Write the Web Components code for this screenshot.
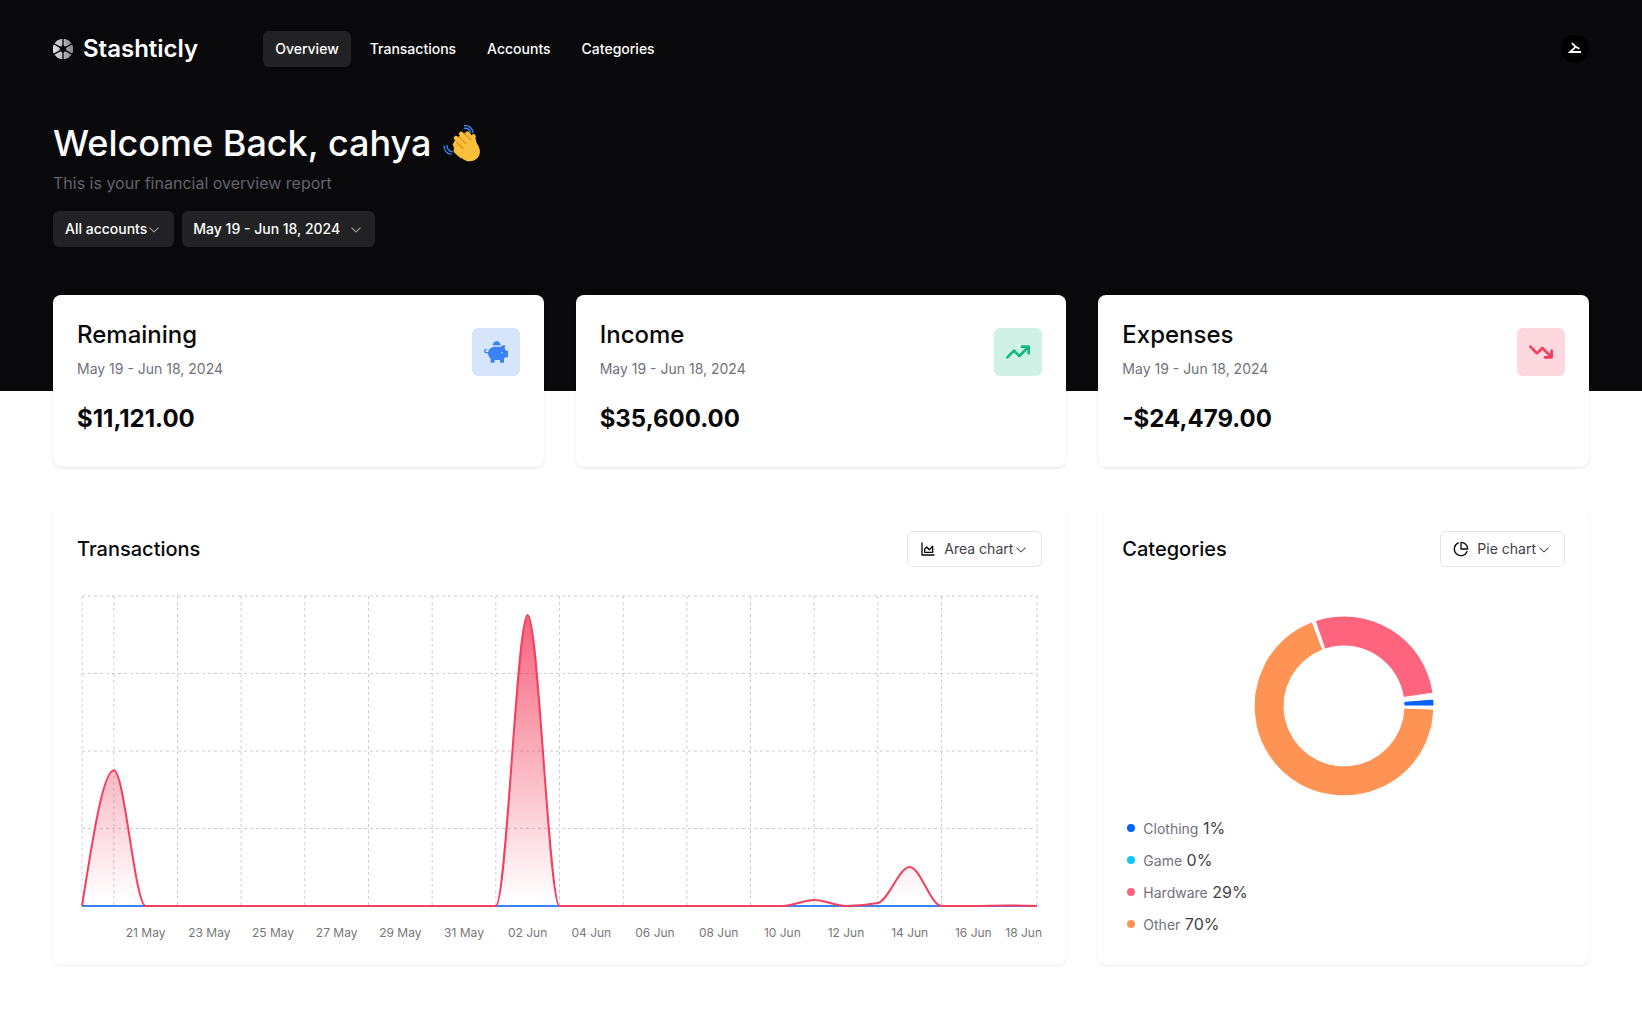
<!DOCTYPE html>
<html lang="en">
<head>
<meta charset="utf-8">
<meta name="viewport" content="width=device-width, initial-scale=1">
<title>Stashticly</title>
<style>
  body {
    margin: 0;
    background: #fff;
    color: #09090b;
    font: 400 14px/20px Inter, "Liberation Sans", sans-serif;
  }
</style>
</head>
<body>
<stash-app></stash-app>

<script>
const define = (name, html, setup) => {
  const template = document.createElement('template');
  template.innerHTML = html;
  customElements.define(name, class extends HTMLElement {
    constructor() {
      super();
      this.attachShadow({ mode: 'open' }).append(template.content.cloneNode(true));
    }
    connectedCallback() {
      if (setup && !this.ready) { this.ready = true; setup(this, this.shadowRoot); }
    }
  });
};

/* ---------- icons ---------- */
const ICONS = {
  logo: ['0 0 20 20', (() => {
    const p = (r, a) => `${(10 + r * Math.cos(a * Math.PI / 180)).toFixed(2)} ${(10 + r * Math.sin(a * Math.PI / 180)).toFixed(2)}`;
    const stops = '<defs><linearGradient id="steel" gradientUnits="userSpaceOnUse" x1="0" y1="0" x2="20" y2="0"><stop offset="0" stop-color="#e2e2e2"/><stop offset=".5" stop-color="#b8b8b8"/><stop offset="1" stop-color="#858585"/></linearGradient></defs>';
    return stops + [0, 60, 120, 180, 240, 300].map(m =>
      `<path fill="url(#steel)" d="M${p(10.2, m - 26)}A10.2 10.2 0 0 1 ${p(10.2, m + 26)}L${p(4.2, m + 21)}L${p(2.8, m)}L${p(4.2, m - 21)}Z"/>`
    ).join('');
  })()],
  chevron: ['0 0 15 15', '<path fill="currentColor" fill-rule="evenodd" d="M3.135 6.158C3.324 5.957 3.64 5.946 3.842 6.135L7.5 9.565L11.158 6.135C11.36 5.946 11.676 5.957 11.865 6.158C12.054 6.359 12.043 6.676 11.842 6.865L7.842 10.615C7.65 10.795 7.35 10.795 7.158 10.615L3.158 6.865C2.957 6.676 2.946 6.359 3.135 6.158Z"/>'],
  area: ['0 0 24 24', '<g fill="none" stroke="currentColor" stroke-width="2" stroke-linecap="round" stroke-linejoin="round"><path d="M3 3v18h18"/><path d="M7 12v5h12V8l-5 5-4-4Z"/></g>'],
  pie: ['0 0 24 24', '<g fill="none" stroke="currentColor" stroke-width="2" stroke-linecap="round" stroke-linejoin="round"><path d="M21.21 15.89A10 10 0 1 1 8 2.83"/><path d="M22 12A10 10 0 0 0 12 2v10z"/></g>'],
  piggy: ['0 0 576 512', '<path fill="currentColor" d="M560 224h-29.500c-8.800-20-21.600-37.700-37.400-52.500L512 96h-32c-29.400 0-55.400 13.500-73 34.300-7.600-1.100-15.100-2.300-23-2.300H256c-77.400 0-141.900 55-156.800 128H56c-14.800 0-26.500-13.500-23.500-28.800C34.700 215.800 45.400 208 57 208h1c3.300 0 6-2.700 6-6v-20c0-3.300-2.700-6-6-6-28.500 0-53.900 20.400-57.500 48.600C-3.900 258.800 22.700 288 56 288h40c0 52.200 25.400 98.100 64 127.300V496c0 8.800 7.200 16 16 16h64c8.800 0 16-7.200 16-16v-48h128v48c0 8.800 7.200 16 16 16h64c8.800 0 16-7.200 16-16v-80.700c11.800-8.900 22.300-19.400 31.300-31.300H560c8.800 0 16-7.200 16-16V240c0-8.800-7.200-16-16-16zm-128 64c-8.800 0-16-7.200-16-16s7.200-16 16-16 16 7.200 16 16-7.200 16-16 16zM256 96h128c5.400 0 10.700.4 15.900.8 0-.3.1-.5.1-.8 0-53-43-96-96-96s-96 43-96 96c0 2.100.5 4.100.6 6.200 15.200-3.900 31-6.200 47.400-6.200z"/>'],
  up: ['0 0 576 512', '<path fill="currentColor" d="M384 160c-17.700 0-32-14.300-32-32s14.300-32 32-32H544c17.700 0 32 14.300 32 32V288c0 17.700-14.300 32-32 32s-32-14.300-32-32V205.300L342.600 374.600c-12.500 12.500-32.800 12.500-45.300 0L192 269.300 54.600 406.600c-12.500 12.500-32.800 12.500-45.300 0s-12.500-32.800 0-45.300l160-160c12.500-12.500 32.800-12.500 45.300 0L320 306.700 466.700 160H384z"/>'],
  down: ['0 0 576 512', '<path fill="currentColor" d="M384 352c-17.700 0-32 14.300-32 32s14.300 32 32 32H544c17.700 0 32-14.300 32-32V224c0-17.700-14.300-32-32-32s-32 14.300-32 32v82.700L342.600 137.400c-12.500-12.500-32.800-12.500-45.300 0L192 242.700 54.600 105.400C42.100 92.900 21.800 92.900 9.300 105.400s-12.500 32.800 0 45.300l160 160c12.500 12.500 32.800 12.500 45.300 0L320 205.300 466.700 352H384z"/>'],
  user: ['0 0 28 28', '<g fill="none" stroke="#fff" stroke-width="1.800"><path d="M11 8.200L14.600 11.800L18.400 13.800"/><path d="M15.200 11.400L9 17H20"/></g>'],
  wave: ['0 0 36 36', `
    <g fill="#fbc03a">
      <path d="M10.500 16.500L18 9.500L26 14L27.400 10.500C28.200 8.700 31.400 9.600 31 12.200C30.600 14.500 31.400 17 32.800 19.400C36 24.600 35.800 30 31.600 33.200C27 36.600 21.700 35.700 17.700 32.100L10.300 25.400Z"/>
      <g fill="none" stroke="#fbc03a" stroke-width="4.200" stroke-linecap="round">
        <path d="M12.200 25.600L17 30"/><path d="M11.300 19.600L19 27"/><path d="M12.300 13.300L22 23"/><path d="M17.200 9.300L26 18"/><path d="M23.200 9.100L27.500 14.500"/>
      </g>
    </g>
    <g fill="none" stroke="#e08a24" stroke-width="1.100" stroke-linecap="round">
      <path d="M12.700 17.200L19 23.200"/><path d="M15 11.800L21.500 18.400"/><path d="M20.200 8.800L26.600 15.200"/>
    </g>
    <g fill="none" stroke="#3f86f0" stroke-width="1.300" stroke-linecap="round">
      <path d="M20.400 1.700C24 .9 28 3.700 28.500 8.300"/><path d="M20.300 4.200C22.800 3.700 25.200 5.200 26 7.900"/>
      <path d="M1 20.800C.9 25 3.500 28.200 7.600 28.600"/><path d="M3.600 20.200C3.900 23.400 5.900 25.900 9 26.400"/>
    </g>`]
};

class StashIcon extends HTMLElement {
  constructor() { super(); this.attachShadow({ mode: 'open' }); }
  connectedCallback() {
    const [box, body] = ICONS[this.getAttribute('name')];
    this.shadowRoot.innerHTML = `<style>:host{display:block;width:16px;height:16px;flex:none}svg{display:block;width:100%;height:100%}</style><svg viewBox="${box}" aria-hidden="true">${body}</svg>`;
  }
}

/* ---------- page ---------- */
define('stash-app', `
  <style>
    :host { display: block; padding-bottom: 32px; }
    main { max-width: 1536px; margin: -96px auto 0; display: grid; gap: 40px; }
    .summary, .charts { display: grid; grid-template-columns: repeat(3, minmax(0, 1fr)); gap: 32px; }
    stash-panel:first-child { grid-column: span 2; }
    @media (max-width: 1000px) {
      .summary, .charts { grid-template-columns: minmax(0, 1fr); }
      stash-panel:first-child { grid-column: auto; }
      main { padding: 0 16px; }
    }
  </style>
  <stash-header></stash-header>
  <main>
    <section class="summary">
      <stash-stat icon="piggy" style="--tint:#d8e6fd;--ink:#3b82f6"><span slot="title">Remaining</span><span slot="value">$11,121.00</span></stash-stat>
      <stash-stat icon="up" style="--tint:#cff1e6;--ink:#10b981"><span slot="title">Income</span><span slot="value">$35,600.00</span></stash-stat>
      <stash-stat icon="down" style="--tint:#fdd9df;--ink:#f43f5e"><span slot="title">Expenses</span><span slot="value">-$24,479.00</span></stash-stat>
    </section>
    <section class="charts">
      <stash-panel>
        <span slot="title">Transactions</span>
        <stash-select slot="action" icon="area" label="Transactions chart type" options="Area chart|Line chart|Bar chart"></stash-select>
        <stash-area-chart></stash-area-chart>
      </stash-panel>
      <stash-panel>
        <span slot="title">Categories</span>
        <stash-select slot="action" icon="pie" label="Categories chart type" options="Pie chart|Radar chart|Radial chart"></stash-select>
        <stash-donut></stash-donut>
      </stash-panel>
    </section>
  </main>`);

define('stash-header', `
  <style>
    :host { display: block; background: #09090b; color: #fff; padding: 31px 16px 144px; }
    .inner { max-width: 1536px; margin: 0 auto; }
    .bar { display: flex; align-items: center; margin-bottom: 56px; }
    .brand { display: flex; align-items: center; gap: 10px; color: inherit; text-decoration: none; font-size: 24px; line-height: 32px; font-weight: 600; }
    .brand stash-icon { width: 20px; height: 20px; }
    nav { display: flex; gap: 7px; margin-left: 65px; flex: 1; }
    nav a { padding: 8px 12px; border-radius: 6px; color: inherit; text-decoration: none; font-weight: 500; }
    nav a[aria-current] { background: #222224; }
    .avatar { border: 0; padding: 0; width: 28px; height: 28px; border-radius: 50%; background: #000; }
    .avatar stash-icon { width: 28px; height: 28px; }
    h1 { display: flex; align-items: center; gap: 12px; margin: 0 0 8px; font-size: 36px; line-height: 40px; font-weight: 500; }
    h1 stash-icon { width: 38px; height: 38px; }
    p { margin: 0 0 16px; font-size: 16px; line-height: 24px; color: #63636b; }
    .filters { display: flex; gap: 8px; }
    .date { display: flex; align-items: center; gap: 8px; border: 0; border-radius: 6px; background: #222224; color: inherit; font: inherit; font-weight: 500; height: 36px; padding: 0 11px; }
    .date stash-icon { opacity: .6; }
    @media (max-width: 700px) { .bar { flex-wrap: wrap; gap: 16px; } nav { margin: 0; flex-wrap: wrap; } }
  </style>
  <div class="inner">
    <div class="bar">
      <a class="brand" href="#"><stash-icon name="logo"></stash-icon><span>Stashticly</span></a>
      <nav><a href="#overview" aria-current="page">Overview</a><a href="#transactions">Transactions</a><a href="#accounts">Accounts</a><a href="#categories">Categories</a></nav>
      <button class="avatar" type="button" aria-label="Account menu"><stash-icon name="user"></stash-icon></button>
    </div>
    <h1><span>Welcome Back, cahya</span><stash-icon name="wave"></stash-icon></h1>
    <p>This is your financial overview report</p>
    <div class="filters">
      <stash-select dark label="Account" options="All accounts"></stash-select>
      <button class="date" type="button"><span>May 19 - Jun 18, 2024</span><stash-icon name="chevron"></stash-icon></button>
    </div>
  </div>`);

define('stash-select', `
  <style>
    :host { display: inline-grid; align-items: center; height: 36px; }
    label, select, .lead, .chevron { grid-area: 1 / 1; }
    label { width: 1px; height: 1px; overflow: hidden; clip-path: inset(50%); }
    select { appearance: none; box-sizing: border-box; field-sizing: content; height: 36px; margin: 0; border: 1px solid #e4e4e7; border-radius: 6px;
      background: #fff; color: #3f3f46; font: inherit; line-height: 20px; padding: 0 28px 0 12px; }
    .lead, .chevron { pointer-events: none; color: #09090b; }
    .lead { display: none; margin-left: 13px; }
    .chevron { justify-self: end; margin-right: 13px; opacity: .7; }
    :host([icon]) .lead { display: block; }
    :host([icon]) select { padding-left: 36px; }
    :host([dark]) select { background: #222224; border: 0; color: #fff; font-weight: 500; padding-right: 27px; }
    :host([dark]) .chevron { color: #fff; margin-right: 12px; opacity: .6; }
  </style>
  <label for="field"></label>
  <select id="field"></select>
  <stash-icon class="chevron" name="chevron"></stash-icon>`, (host, root) => {
  root.querySelector('label').setAttribute('aria-label', host.getAttribute('label'));
  const select = root.querySelector('select');
  select.setAttribute('aria-label', host.getAttribute('label'));
  host.getAttribute('options').split('|').forEach(o => select.add(new Option(o)));
  if (host.hasAttribute('icon')) {
    const lead = document.createElement('stash-icon');
    lead.className = 'lead';
    lead.setAttribute('name', host.getAttribute('icon'));
    root.append(lead);
  }
});

define('stash-stat', `
  <style>
    :host { display: block; background: #fff; border-radius: 8px; box-shadow: 0 1px 3px rgba(0,0,0,.1); padding: 24px; }
    header { display: flex; justify-content: space-between; align-items: center; margin-bottom: 24px; }
    h2 { margin: 0 0 8px; font-size: 24px; line-height: 32px; font-weight: 500; }
    p { margin: 0; color: #71717a; }
    .badge { display: grid; place-items: center; width: 48px; height: 48px; margin-top: 6px; border-radius: 6px; background: var(--tint); color: var(--ink); }
    .badge stash-icon { width: 24px; height: 24px; }
    .value { margin-bottom: 8px; font-size: 24px; line-height: 32px; font-weight: 700; }
  </style>
  <header>
    <div><h2><slot name="title"></slot></h2><p>May 19 - Jun 18, 2024</p></div>
    <div class="badge"></div>
  </header>
  <div class="value"><slot name="value"></slot></div>`, (host, root) => {
  const icon = document.createElement('stash-icon');
  icon.setAttribute('name', host.getAttribute('icon'));
  root.querySelector('.badge').append(icon);
});

define('stash-panel', `
  <style>
    :host { display: block; min-width: 0; background: #fff; border-radius: 8px; box-shadow: 0 1px 2px rgba(0,0,0,.08); padding: 24px; }
    header { display: flex; justify-content: space-between; align-items: center; margin-bottom: 24px; }
    h2 { margin: 0; font-size: 20px; line-height: 28px; font-weight: 500; }
  </style>
  <header><h2><slot name="title"></slot></h2><slot name="action"></slot></header>
  <slot></slot>`);

/* Cubic path through the points that never overshoots them. */
function monotonePath(pts) {
  const n = pts.length, s = [], t = [];
  for (let i = 0; i < n - 1; i++) s[i] = (pts[i + 1][1] - pts[i][1]) / (pts[i + 1][0] - pts[i][0]);
  for (let i = 1; i < n - 1; i++) {
    const mean = (s[i - 1] + s[i]) / 2;
    t[i] = (Math.sign(s[i - 1]) + Math.sign(s[i])) * Math.min(Math.abs(s[i - 1]), Math.abs(s[i]), Math.abs(mean) / 2) || 0;
  }
  t[0] = (3 * s[0] - t[1]) / 2;
  t[n - 1] = (3 * s[n - 2] - t[n - 2]) / 2;
  let d = `M${pts[0]}`;
  for (let i = 0; i < n - 1; i++) {
    const [x0, y0] = pts[i], [x1, y1] = pts[i + 1], k = (x1 - x0) / 3;
    d += `C${x0 + k},${y0 + k * t[i]},${x1 - k},${y1 - k * t[i + 1]},${x1},${y1}`;
  }
  return d;
}

define('stash-area-chart', `
  <style>
    :host { display: block; height: 350px; }
    svg { display: block; width: 100%; height: 350px; overflow: visible; }
    text { font-size: 12px; fill: #777; text-anchor: middle; }
    text.end { text-anchor: end; }
  </style>
  <svg role="img" aria-label="Income and expenses by day"></svg>`, (host, root) => {
  const svg = root.querySelector('svg');
  const days = 30, top = 5, base = 315;
  const expenses = { 1: 135.7, 14: 291, 23: 6, 25: 3, 26: 39, 29: .5 };
  const draw = () => {
    const width = Math.floor(host.getBoundingClientRect().width);
    if (!width) return;
    const x = i => 5 + (width - 10) * i / days;
    let grid = '', labels = '';
    for (let i = 0; i < 5; i++) { const y = top + i * 77.5; grid += `M5 ${y}H${width - 5}`; }
    for (const i of [0, 1, 3, 5, 7, 9, 11, 13, 15, 17, 19, 21, 23, 25, 27, 30]) grid += `M${x(i)} ${top}V${base}`;
    const start = Date.UTC(2024, 4, 19);
    for (let i = 2; i <= days; i += 2) {
      const d = new Date(start + i * 864e5);
      const name = String(d.getUTCDate()).padStart(2, '0') + (d.getUTCMonth() === 4 ? ' May' : ' Jun');
      labels += i === days ? `<text class="end" x="${width}" y="346">${name}</text>` : `<text x="${x(i)}" y="346">${name}</text>`;
    }
    const pts = Array.from({ length: days + 1 }, (_, i) => [x(i), base - (expenses[i] || 0)]);
    const line = monotonePath(pts);
    svg.innerHTML = `
      <defs><linearGradient id="fade" x1="0" y1="0" x2="0" y2="1"><stop offset="2%" stop-color="#f43f5e" stop-opacity=".8"/><stop offset="98%" stop-color="#f43f5e" stop-opacity="0"/></linearGradient></defs>
      <path d="${grid}" fill="none" stroke="#ccc" stroke-dasharray="3 3"/>
      <path d="M5 ${base}H${width - 5}" stroke="#3b82f6" stroke-width="2"/>
      <path d="${line}V${base}H5Z" fill="url(#fade)"/>
      <path d="${line}" fill="none" stroke="#f43f5e" stroke-width="2"/>${labels}`;
  };
  draw();
  new ResizeObserver(draw).observe(host);
});

define('stash-donut', `
  <style>
    :host { display: flex; flex-direction: column; align-items: center; justify-content: space-between; height: 350px; }
    svg { width: 180px; height: 180px; margin-top: 25px; overflow: visible; }
    ul { align-self: stretch; list-style: none; display: grid; gap: 8px; margin: 0; padding: 0 5px 5px; }
    li { display: flex; align-items: center; gap: 8px; height: 24px; font-size: 16px; line-height: 24px; color: #3f3f46; }
    li i { width: 8px; height: 8px; border-radius: 50%; flex: none; }
    li small { font-size: 14px; color: #71717a; }
  </style>
  <svg viewBox="-90 -90 180 180" role="img" aria-label="Spending by category"></svg>
  <ul></ul>`, (host, root) => {
  const slices = [
    ['Clothing', '1%', '#0062ff', 0, 4.4],
    ['Game', '0%', '#12c6ff', 6.2, 6.2],
    ['Hardware', '29%', '#ff647f', 8.2, 108.6],
    ['Other', '70%', '#ff9354', 110.700, 358]
  ];
  const p = (r, a) => `${r * Math.cos(a * Math.PI / 180)} ${-r * Math.sin(a * Math.PI / 180)}`;
  root.querySelector('svg').innerHTML = slices.map(([, , c, a, b]) => {
    const big = b - a > 180 ? 1 : 0;
    return `<path fill="${c}" stroke="#fff" d="M${p(90, a)}A90 90 0 ${big} 0 ${p(90, b)}L${p(60, b)}A60 60 0 ${big} 1 ${p(60, a)}Z"/>`;
  }).join('');
  root.querySelector('ul').innerHTML = slices.map(([n, v, c]) => `<li><i style="background:${c}"></i><span><small>${n}</small> ${v}</span></li>`).join('');
});

customElements.define('stash-icon', StashIcon);
</script>
</body>
</html>
